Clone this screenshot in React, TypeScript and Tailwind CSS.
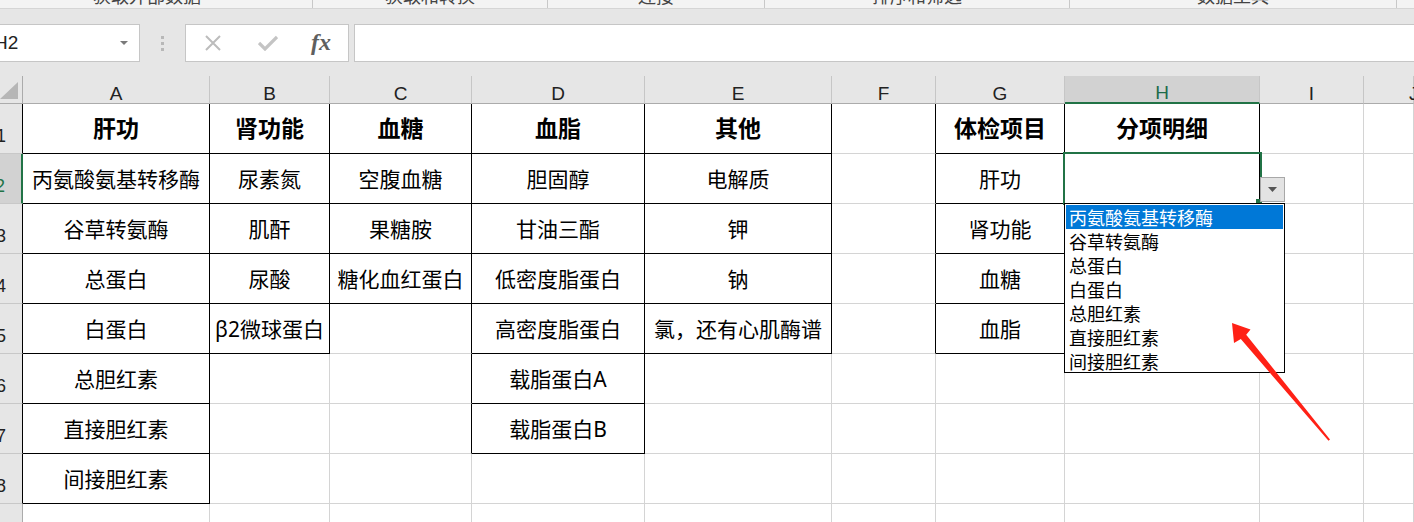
import React from 'react';

const LETTERS = ['A', 'B', 'C', 'D', 'E', 'F', 'G', 'H', 'I', 'J'];

const DATA: string[][] = [
  ['肝功', '肾功能', '血糖', '血脂', '其他', '', '体检项目', '分项明细', '', ''],
  ['丙氨酸氨基转移酶', '尿素氮', '空腹血糖', '胆固醇', '电解质', '', '肝功', '', '', ''],
  ['谷草转氨酶', '肌酐', '果糖胺', '甘油三酯', '钾', '', '肾功能', '', '', ''],
  ['总蛋白', '尿酸', '糖化血红蛋白', '低密度脂蛋白', '钠', '', '血糖', '', '', ''],
  ['白蛋白', 'β2微球蛋白', '', '高密度脂蛋白', '氯，还有心肌酶谱', '', '血脂', '', '', ''],
  ['总胆红素', '', '', '载脂蛋白A', '', '', '', '', '', ''],
  ['直接胆红素', '', '', '载脂蛋白B', '', '', '', '', '', ''],
  ['间接胆红素', '', '', '', '', '', '', '', '', ''],
  ['', '', '', '', '', '', '', '', '', ''],
];

// last bordered row for each column (1-based rows), 0 = none
const BORDER_TO = [8, 5, 4, 7, 5, 0, 5, 5, 0, 0];

const OPTIONS = ['丙氨酸氨基转移酶', '谷草转氨酶', '总蛋白', '白蛋白', '总胆红素', '直接胆红素', '间接胆红素'];

const GROUPS = [
  { label: '获取外部数据', cls: 'w-[313px] pr-[18px]' },
  { label: '获取和转换', cls: 'w-[235px]' },
  { label: '连接', cls: 'w-[217px]' },
  { label: '排序和筛选', cls: 'w-[305px]' },
  { label: '数据工具', cls: 'w-[327px]' },
];

function bordered(r: number, c: number) {
  if (c < 0 || c >= BORDER_TO.length) return false;
  return r >= 1 && r <= BORDER_TO[c];
}

function Ribbon() {
  return (
    <div className="flex h-[9px] overflow-hidden bg-[#f3f3f3] border-b border-[#d5d5d5] [font-family:'Noto_Sans_CJK_SC',sans-serif] text-[18px] text-[#444]">
      {GROUPS.map((g, i) => (
        <div key={i} className={`${g.cls} shrink-0 flex justify-center border-r border-[#c8c8c8]`}>
          <div className="-mt-[14px] leading-[18px] h-[18px]">{g.label}</div>
        </div>
      ))}
    </div>
  );
}

function FormulaBar() {
  return (
    <div className="h-[67px] bg-[#e6e6e6] pt-[15px]">
      <div className="flex h-[38px]">
        <div className="w-[140px] shrink-0 bg-white border border-l-0 border-[#c6c6c6] flex items-center justify-between pr-[10px]">
          <span className="-ml-[6px] text-[19px] text-[#222] [font-family:'Liberation_Sans',sans-serif]">H2</span>
          <svg width="10" height="6" viewBox="0 0 10 6">
            <path d="M1 1 L9 1 L5 5 Z" fill="#7a7a7a" />
          </svg>
        </div>
        <div className="w-[45px] shrink-0 flex flex-col items-center justify-center gap-[3px]">
          <div className="w-[3px] h-[3px] bg-[#b8b8b8]" />
          <div className="w-[3px] h-[3px] bg-[#b8b8b8]" />
          <div className="w-[3px] h-[3px] bg-[#b8b8b8]" />
        </div>
        <div className="w-[164px] shrink-0 bg-white border border-[#c6c6c6] flex items-center">
          <svg className="ml-[18px]" width="18" height="16" viewBox="0 0 18 16">
            <path d="M2 1 L16 15 M16 1 L2 15" stroke="#bcbcbc" strokeWidth="2" />
          </svg>
          <svg className="ml-[36px]" width="20" height="16" viewBox="0 0 20 16">
            <path d="M1 8 L7 14 L19 2" stroke="#c4c4c4" strokeWidth="3.2" fill="none" />
          </svg>
          <span className="ml-[33px] italic font-bold text-[24px] text-[#5f5f5f] [font-family:'Liberation_Serif',serif] leading-none -mt-[3px]">fx</span>
        </div>
        <div className="ml-[5px] flex-1 bg-white border border-r-0 border-[#c6c6c6]" />
      </div>
    </div>
  );
}

function Sheet() {
  return (
    <div className="relative grid grid-cols-[23px_187px_120px_142px_173px_187px_104px_129px_195px_104px_50px] grid-rows-[28px_repeat(9,50px)] [font-family:'Noto_Sans','Noto_Sans_CJK_SC',sans-serif]">
      {/* corner */}
      <div className="bg-[#e6e6e6] border-r border-b border-[#ababab] relative">
        <svg className="absolute left-0 top-[6px]" width="19" height="18" viewBox="0 0 19 18">
          <path d="M0 17 L18 17 L18 0 Z" fill="#b6b6b6" />
        </svg>
      </div>
      {LETTERS.map((l) =>
        l === 'H' ? (
          <div key={l} className="bg-[#d2d2d2] border-r border-[#c6c6c6] border-b-2 border-b-[#217346] flex justify-center pt-[3px] text-[19px] text-[#1d6b4a] [font-family:'Liberation_Sans',sans-serif]">
            {l}
          </div>
        ) : (
          <div
            key={l}
            className={`bg-[#e6e6e6] border-r border-r-[#c6c6c6] border-b border-b-[#ababab] flex pt-[4px] text-[19px] text-[#222] [font-family:'Liberation_Sans',sans-serif] ${l === 'J' ? 'pl-[45px]' : 'justify-center'}`}
          >
            {l}
          </div>
        )
      )}
      {DATA.map((row, ri) => {
        const r = ri + 1;
        const sel = r === 2;
        return (
          <React.Fragment key={r}>
            <div
              className={`flex items-end justify-end pr-[16px] pb-[3px] text-[18px] [font-family:'Liberation_Sans',sans-serif] border-b border-b-[#c8c8c8] ${
                sel
                  ? 'bg-[#d2d2d2] text-[#217346] border-r-2 border-r-[#217346]'
                  : `bg-[#e6e6e6] text-[#222] border-r ${bordered(r, 0) ? 'border-r-black' : 'border-r-[#ababab]'}`
              }`}
            >
              {r}
            </div>
            {row.map((txt, c) => {
              const rb = bordered(r, c) || bordered(r, c + 1);
              const bb = bordered(r, c) || bordered(r + 1, c);
              const head = r === 1;
              return (
                <div
                  key={c}
                  className={`bg-white border-r border-b flex items-center justify-center whitespace-nowrap text-black ${
                    rb ? 'border-r-black' : 'border-r-[#d4d4d4]'
                  } ${bb ? 'border-b-black' : 'border-b-[#d4d4d4]'} ${
                    head ? 'text-[23px] font-bold' : 'text-[21px] pt-[2px]'
                  }`}
                >
                  {txt}
                </div>
              );
            })}
          </React.Fragment>
        );
      })}

      {/* active cell H2 */}
      <div className="absolute left-[1063px] top-[76px] w-[199px] h-[53px] border-2 border-[#217346]" />
      <div className="absolute left-[1256px] top-[123px] w-[5px] h-[5px] bg-[#217346]" />

      {/* validation dropdown button */}
      <div className="absolute left-[1260px] top-[101px] w-[25px] h-[25px] bg-[#e3e3e3] border border-[#a8a8a8] flex items-center justify-center">
        <svg width="9" height="5" viewBox="0 0 9 5">
          <path d="M0 0 L9 0 L4.5 5 Z" fill="#555" />
        </svg>
      </div>

      {/* validation list */}
      <div className="absolute left-[1064px] top-[127px] w-[221px] h-[170px] bg-white border border-black p-[1px] [font-family:'Noto_Sans_CJK_SC',sans-serif] text-[18px]">
        {OPTIONS.map((o, i) => (
          <div
            key={o}
            className={`h-[24px] leading-[24px] pl-[3px] whitespace-nowrap ${i === 0 ? 'bg-[#0078d7] text-white' : 'text-black'}`}
          >
            {o}
          </div>
        ))}
      </div>
    </div>
  );
}

export default function App() {
  return (
    <div className="relative w-[1414px] h-[522px] overflow-hidden bg-white">
      <Ribbon />
      <FormulaBar />
      <Sheet />
      <svg className="absolute left-0 top-0 pointer-events-none" width="1414" height="522" viewBox="0 0 1414 522">
        <polygon
          points="1232,323 1250.5,329.5 1246.2,334.7 1330,439.5 1328.5,440.8 1240.8,339.1 1234,343"
          fill="#ff2116"
        />
      </svg>
    </div>
  );
}
